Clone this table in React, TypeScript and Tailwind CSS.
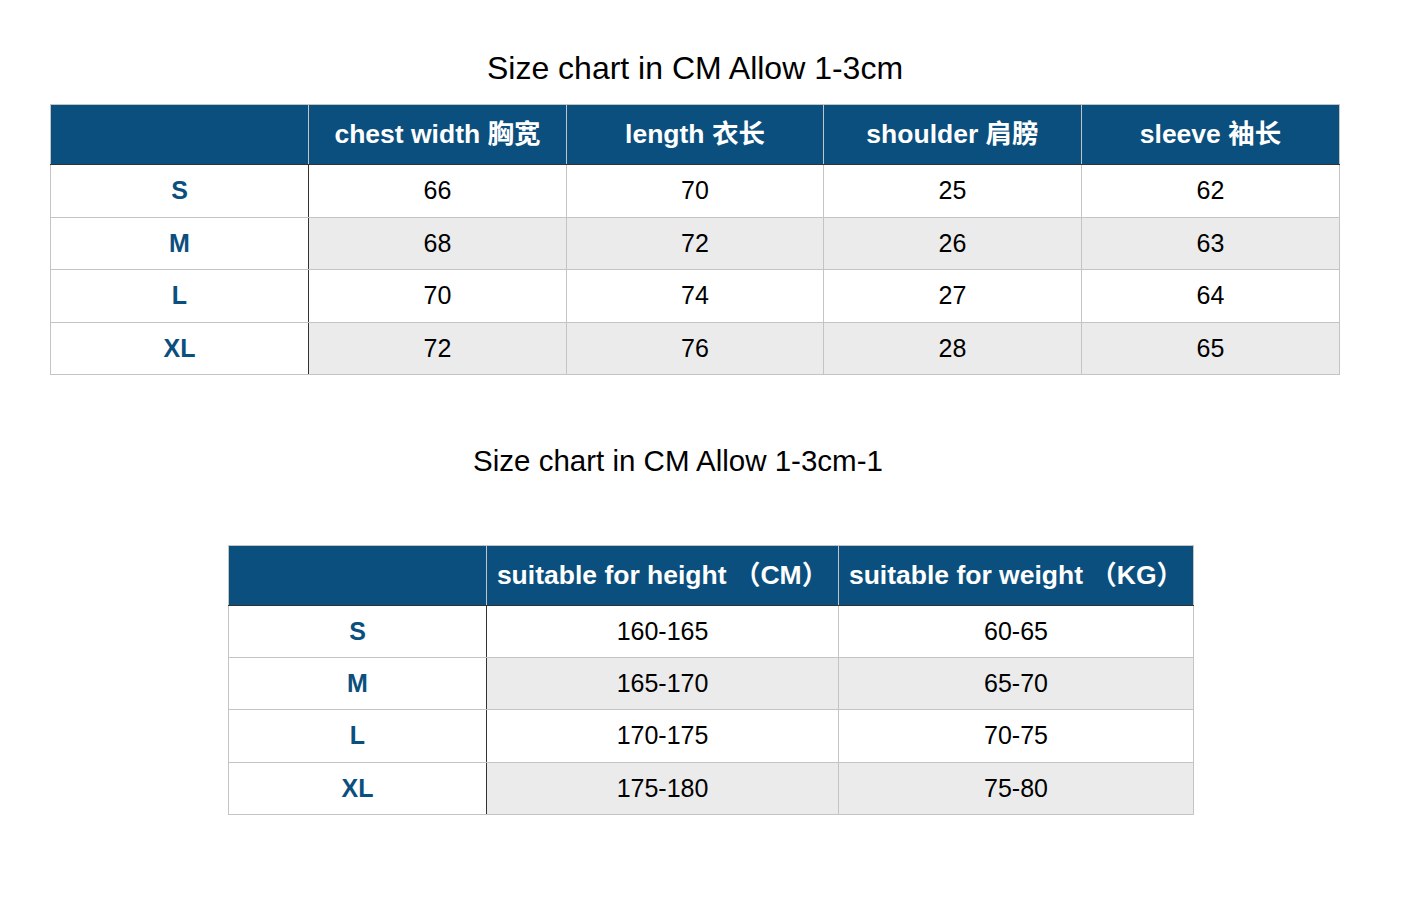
import React from 'react';

// Size chart data
const chart1 = {
  title: 'Size chart in CM Allow 1-3cm',
  headers: ['chest width 胸宽', 'length 衣长', 'shoulder 肩膀', 'sleeve 袖长'],
  rows: [
    ['S', '66', '70', '25', '62'],
    ['M', '68', '72', '26', '63'],
    ['L', '70', '74', '27', '64'],
    ['XL', '72', '76', '28', '65'],
  ],
};

const chart2 = {
  title: 'Size chart in CM Allow 1-3cm-1',
  headers: ['suitable for height （CM）', 'suitable for weight （KG）'],
  rows: [
    ['S', '160-165', '60-65'],
    ['M', '165-170', '65-70'],
    ['L', '170-175', '70-75'],
    ['XL', '175-180', '75-80'],
  ],
};

const rowHeights1 = ['h-[53px]', 'h-[52px]', 'h-[53px]', 'h-[52px]'];
const rowHeights2 = ['h-[52px]', 'h-[52px]', 'h-[53px]', 'h-[52px]'];

function SizeTable({
  headers,
  rows,
  heights,
  colClasses,
}: {
  headers: string[];
  rows: string[][];
  heights: string[];
  colClasses: string[];
}) {
  return (
    <table className="w-full table-fixed border-collapse">
      <colgroup>
        {colClasses.map((c, i) => (
          <col key={i} className={c} />
        ))}
      </colgroup>
      <thead>
        <tr className="h-[60px] bg-[#0b4f7e]">
          <th className="border border-[#c4c4c4] border-b-[#333]"></th>
          {headers.map((h) => (
            <th
              key={h}
              className="border border-[#c4c4c4] border-b-[#333] text-center text-[26.5px] font-bold text-white whitespace-nowrap"
            >
              {h}
            </th>
          ))}
        </tr>
      </thead>
      <tbody>
        {rows.map((row, r) => (
          <tr key={row[0]} className={`${heights[r]} ${r % 2 === 1 ? 'bg-[#ebebeb]' : 'bg-white'}`}>
            <td className="border border-[#c4c4c4] border-r-[#333] bg-white text-center text-[25px] font-bold text-[#0b4f7e]">
              {row[0]}
            </td>
            {row.slice(1).map((v, i) => (
              <td key={i} className="border border-[#c4c4c4] text-center text-[25px] text-black">
                {v}
              </td>
            ))}
          </tr>
        ))}
      </tbody>
    </table>
  );
}

export default function App() {
  return (
    <div
      className="min-h-[908px] bg-white"
      style={{ fontFamily: '"Liberation Sans", "Noto Sans CJK SC", Arial, sans-serif' }}
    >
      <div className="pt-[48px]">
        <h1 className="ml-[50px] w-[1290px] text-center text-[32px] leading-[40px] text-black">
          {chart1.title}
        </h1>
        <div className="ml-[50px] mt-[16px] w-[1289px]">
          <SizeTable
            headers={chart1.headers}
            rows={chart1.rows}
            heights={rowHeights1}
            colClasses={['w-[258px]', 'w-[258px]', 'w-[257px]', 'w-[258px]', 'w-[258px]']}
          />
        </div>

        <h2 className="ml-[50px] mt-[66px] w-[1256px] text-center text-[29.5px] leading-[40px] text-black">
          {chart2.title}
        </h2>
        <div className="ml-[228px] mt-[64px] w-[965px]">
          <SizeTable
            headers={chart2.headers}
            rows={chart2.rows}
            heights={rowHeights2}
            colClasses={['w-[258px]', 'w-[352px]', 'w-[355px]']}
          />
        </div>
      </div>
    </div>
  );
}
